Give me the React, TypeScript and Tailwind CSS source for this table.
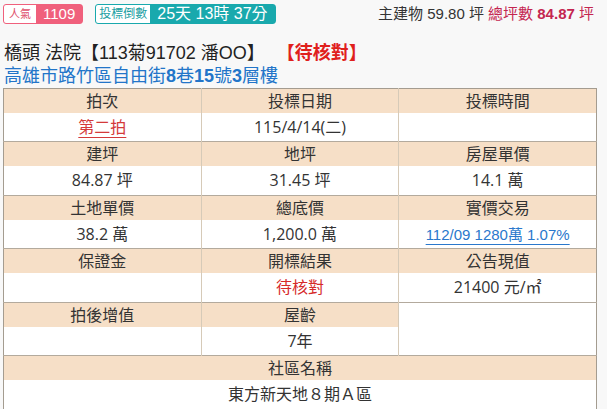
const th = "border-r border-[#d6cab8] last:border-r-0 font-normal";
const td = "border-r border-[#d6cab8] last:border-r-0";

function HeadRow({ cells }: { cells: string[] }) {
  return (
    <tr className="h-[24px] bg-[#f6dfc7]">
      {cells.map((c, i) => (
        <th key={i} className={th}>
          {c}
        </th>
      ))}
    </tr>
  );
}

export default function App() {
  return (
    <div
      className="h-[409px] w-[607px] overflow-hidden bg-[#f8f8f8] text-[#333]"
      style={{ fontFamily: '"Liberation Sans", "Noto Sans CJK TC", sans-serif' }}
    >
      <div className="flex items-center px-[3px] pt-[3px]">
        <div className="flex h-[20px] items-stretch rounded-[3px] border border-[#f0607c] bg-white">
          <span className="flex items-center px-[5px] text-[11px] text-[#e0506c]">人氣</span>
          <span className="flex items-center bg-[#f0607c] px-[7px] text-[15px] text-white">1109</span>
        </div>
        <div className="ml-[12px] flex h-[20px] items-stretch rounded-[3px] border border-[#19a9ad] bg-white">
          <span className="flex items-center px-[3px] text-[12px] text-[#1b9ea2]">投標倒數</span>
          <span className="flex items-center bg-[#19a9ad] px-[7px] text-[16px] text-white">
            25天 13時 37分
          </span>
        </div>
        <div className="ml-auto pr-[10px] text-[15px]">
          主建物 59.80 坪 <span className="text-[#c42550]">總坪數 <b>84.87</b> 坪</span>
        </div>
      </div>

      <div className="mt-[15px] flex items-center px-[4px] text-[18px] leading-[24px]">
        <span className="text-[#222]">橋頭 法院【113菊91702 潘OO】</span>
        <span className="ml-[12px] font-bold text-[#e0201c]">【待核對】</span>
      </div>
      <div className="px-[4px] text-[18px] leading-[22px] text-[#2275c9]">
        高雄市路竹區自由街<b>8</b>巷<b>15</b>號<b>3</b>層樓
      </div>

      <table
        className="ml-[3px] mt-[1px] w-[594px] table-fixed border-collapse border border-[#a49c90] bg-white text-center text-[16px]"
        style={{ fontFamily: '"Open Sans", "Noto Sans CJK TC", sans-serif' }}
      >
        <tbody>
          <HeadRow cells={["拍次", "投標日期", "投標時間"]} />
          <tr className="h-[29px] border-b border-[#b3aa9d]">
            <td className={td}>
              <span className="text-[#d43a3a] underline decoration-[#d43a3a] underline-offset-4">第二拍</span>
            </td>
            <td className={td}>115/4/14(二)</td>
            <td className={td}></td>
          </tr>
          <HeadRow cells={["建坪", "地坪", "房屋單價"]} />
          <tr className="h-[29px] border-b border-[#b3aa9d]">
            <td className={td}>84.87 坪</td>
            <td className={td}>31.45 坪</td>
            <td className={td}>14.1 萬</td>
          </tr>
          <HeadRow cells={["土地單價", "總底價", "實價交易"]} />
          <tr className="h-[29px] border-b border-[#b3aa9d]">
            <td className={td}>38.2 萬</td>
            <td className={td}>1,200.0 萬</td>
            <td className={td}>
              <span
                className="text-[15px] text-[#2a78cc] underline underline-offset-4"
                style={{ fontFamily: '"Liberation Sans", "Noto Sans CJK TC", sans-serif' }}
              >
                112/09 1280萬 1.07%
              </span>
            </td>
          </tr>
          <HeadRow cells={["保證金", "開標結果", "公告現值"]} />
          <tr className="h-[29px] border-b border-[#b3aa9d]">
            <td className={td}></td>
            <td className={`${td} text-[#d62a2a]`}>待核對</td>
            <td className={td}>21400 元/㎡</td>
          </tr>
          <tr className="h-[24px]">
            <th className={`${th} bg-[#f6dfc7]`}>拍後增值</th>
            <th className={`${th} bg-[#f6dfc7]`}>屋齡</th>
            <td rowSpan={2} className="bg-white"></td>
          </tr>
          <tr className="h-[29px] border-b border-[#b3aa9d]">
            <td className={td}></td>
            <td className="border-r border-[#d6cab8]">7年</td>
          </tr>
          <tr className="h-[24px] bg-[#f6dfc7]">
            <th colSpan={3} className="font-normal">社區名稱</th>
          </tr>
          <tr className="h-[29px]">
            <td colSpan={3}>東方新天地８期Ａ區</td>
          </tr>
        </tbody>
      </table>
    </div>
  );
}
